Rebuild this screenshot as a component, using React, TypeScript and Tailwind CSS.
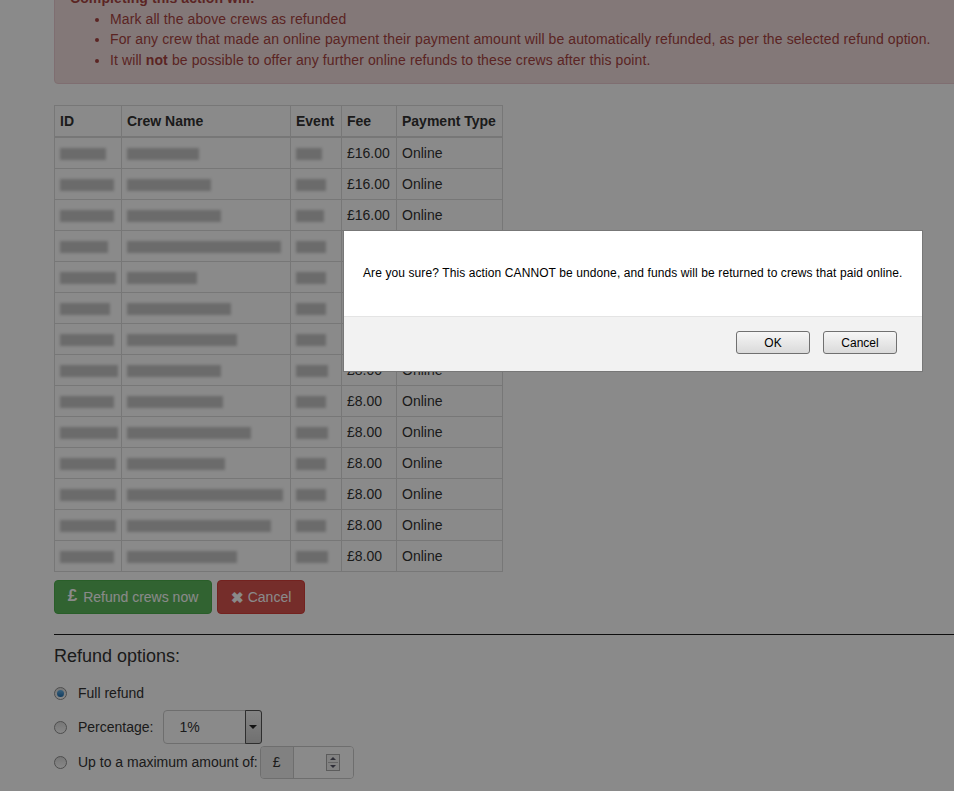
import React from "react";

type Row = { id: number; name: number; ev: number; fee: string };

// widths of the blurred (redacted) cell contents
const rows: Row[] = [
  { id: 46, name: 72, ev: 26, fee: "£16.00" },
  { id: 54, name: 84, ev: 30, fee: "£16.00" },
  { id: 54, name: 94, ev: 28, fee: "£16.00" },
  { id: 48, name: 154, ev: 30, fee: "£16.00" },
  { id: 56, name: 70, ev: 30, fee: "£16.00" },
  { id: 50, name: 104, ev: 30, fee: "£16.00" },
  { id: 54, name: 110, ev: 30, fee: "£8.00" },
  { id: 58, name: 94, ev: 32, fee: "£8.00" },
  { id: 54, name: 96, ev: 30, fee: "£8.00" },
  { id: 58, name: 124, ev: 32, fee: "£8.00" },
  { id: 56, name: 98, ev: 30, fee: "£8.00" },
  { id: 56, name: 156, ev: 30, fee: "£8.00" },
  { id: 56, name: 144, ev: 30, fee: "£8.00" },
  { id: 54, name: 110, ev: 32, fee: "£8.00" },
];

function Blur({ w }: { w: number }) {
  return (
    <span
      className="inline-block h-[12px] align-middle bg-[#c6c6c6] blur-[1.5px]"
      style={{ width: w }}
    />
  );
}

function Radio({ checked }: { checked?: boolean }) {
  return (
    <span className="w-[13px] h-[13px] rounded-full border border-[#8f8f8f] bg-gradient-to-b from-[#dcdcdc] to-[#fbfbfb] flex items-center justify-center shrink-0">
      {checked && <span className="w-[7px] h-[7px] rounded-full bg-gradient-to-b from-[#6ab4e6] to-[#1d6fb0]" />}
    </span>
  );
}

export default function App() {
  return (
    <div
      className="relative w-[954px] h-[791px] overflow-hidden bg-white text-[14px] leading-[20px] text-[#333]"
      style={{ fontFamily: '"Liberation Sans", Arial, sans-serif' }}
    >
      <div className="pl-[54px] w-[1100px]">
        {/* Danger alert */}
        <div className="-mt-[28px] border border-[#ebccd1] bg-[#f2dede] text-[#a94442] rounded-[4px] pt-[15px] px-[15px] pb-[13px] leading-[20.5px] tracking-[0.1px]">
          <strong className="block">Completing this action will:</strong>
          <ul className="list-disc pl-[40px] m-0">
            <li>Mark all the above crews as refunded</li>
            <li>For any crew that made an online payment their payment amount will be automatically refunded, as per the selected refund option.</li>
            <li>
              It will <strong>not</strong> be possible to offer any further online refunds to these crews after this point.
            </li>
          </ul>
        </div>

        {/* Crew table */}
        <table className="mt-[21px] border-collapse border border-[#ddd] table-fixed w-[448px]">
          <colgroup>
            <col className="w-[67px]" />
            <col className="w-[169px]" />
            <col className="w-[51px]" />
            <col className="w-[55px]" />
            <col className="w-[106px]" />
          </colgroup>
          <thead>
            <tr className="text-left">
              {["ID", "Crew Name", "Event", "Fee", "Payment Type"].map((h) => (
                <th key={h} className="border border-[#ddd] border-b-2 px-[5px] py-[5px] font-bold whitespace-nowrap">
                  {h}
                </th>
              ))}
            </tr>
          </thead>
          <tbody>
            {rows.map((r, i) => (
              <tr key={i}>
                <td className="border border-[#ddd] px-[5px] py-[5px] h-[31px]"><Blur w={r.id} /></td>
                <td className="border border-[#ddd] px-[5px] py-[5px]"><Blur w={r.name} /></td>
                <td className="border border-[#ddd] px-[5px] py-[5px]"><Blur w={r.ev} /></td>
                <td className="border border-[#ddd] px-[5px] py-[5px]">{r.fee}</td>
                <td className="border border-[#ddd] px-[5px] py-[5px]">Online</td>
              </tr>
            ))}
          </tbody>
        </table>

        {/* Actions */}
        <div className="mt-[8px] flex gap-[5px]">
          <button className="w-[158px] h-[34px] rounded-[4px] bg-[#5cb85c] border border-[#4cae4c] text-white flex items-center justify-center gap-[6px]">
            <span className="text-[17px] font-bold leading-none -mt-[3px]">£</span>
            <span>Refund crews now</span>
          </button>
          <button className="w-[88px] h-[34px] rounded-[4px] bg-[#d9534f] border border-[#d43f3a] text-white flex items-center justify-center gap-[4px]">
            <span className="text-[15px] font-bold leading-none">✖</span>
            <span>Cancel</span>
          </button>
        </div>

        <hr className="mt-[20px] border-0 border-t border-[#1a1a1a]" />

        <h4 className="mt-[11px] text-[18px] leading-[20px] font-medium">Refund options:</h4>

        <div className="mt-[17px] flex flex-col">
          <label className="flex items-center h-[20px]">
            <span><Radio checked /></span>
            <span className="ml-[11px]">Full refund</span>
          </label>
          <label className="mt-[7px] flex items-center h-[34px]">
            <span><Radio /></span>
            <span className="ml-[11px]">Percentage:</span>
            <span className="ml-[9px] w-[99px] h-[34px] border border-[#ccc] rounded-[4px] bg-white flex items-stretch">
              <span className="flex-1 pl-[16px] flex items-center">1%</span>
              <span className="w-[17px] m-[-1px] border border-[#555] rounded-r-[3px] bg-gradient-to-b from-[#f4f4f4] to-[#cfcfcf] flex items-center justify-center">
                <span className="w-0 h-0 border-l-[4px] border-r-[4px] border-t-[4px] border-l-transparent border-r-transparent border-t-[#222]" />
              </span>
            </span>
          </label>
          <label className="mt-[1px] flex items-center h-[34px]">
            <span><Radio /></span>
            <span className="ml-[11px]">Up to a maximum amount of:</span>
            <span className="ml-[2px] h-[33px] flex border border-[#ccc] rounded-[4px] overflow-hidden">
              <span className="w-[33px] bg-[#eee] border-r border-[#ccc] flex items-center justify-center">£</span>
              <span className="w-[59px] bg-white flex items-center justify-end pr-[13px]">
                <span className="w-[14px] h-[17px] border border-[#aaa] bg-[#f0f0f0] flex flex-col items-center justify-center gap-[2px]">
                  <span className="w-0 h-0 border-l-[3px] border-r-[3px] border-b-[3px] border-l-transparent border-r-transparent border-b-[#556]" />
                  <span className="w-[10px] h-px bg-[#bbb]" />
                  <span className="w-0 h-0 border-l-[3px] border-r-[3px] border-t-[3px] border-l-transparent border-r-transparent border-t-[#556]" />
                </span>
              </span>
            </span>
          </label>
        </div>
      </div>

      {/* Modal backdrop */}
      <div className="absolute inset-0 bg-black/[0.46]" />

      {/* Confirm dialog */}
      <div className="absolute left-[343px] top-[230px] w-[580px] h-[142px] border border-[#777] bg-white flex flex-col text-[12px] leading-[14px] text-black">
        <div className="h-[85px] pl-[19px] pb-[2px] flex items-center whitespace-nowrap tracking-[0.1px]">
          Are you sure? This action CANNOT be undone, and funds will be returned to crews that paid online.
        </div>
        <div className="flex-1 bg-[#f2f2f2] border-t border-[#e4e4e4] flex justify-end items-start pt-[14px] pr-[25px] gap-[13px]">
          <button className="w-[74px] h-[23px] border border-[#707070] rounded-[3px] bg-gradient-to-b from-[#f6f6f6] to-[#dadada]">OK</button>
          <button className="w-[74px] h-[23px] border border-[#707070] rounded-[3px] bg-gradient-to-b from-[#f6f6f6] to-[#dadada]">Cancel</button>
        </div>
      </div>
    </div>
  );
}
